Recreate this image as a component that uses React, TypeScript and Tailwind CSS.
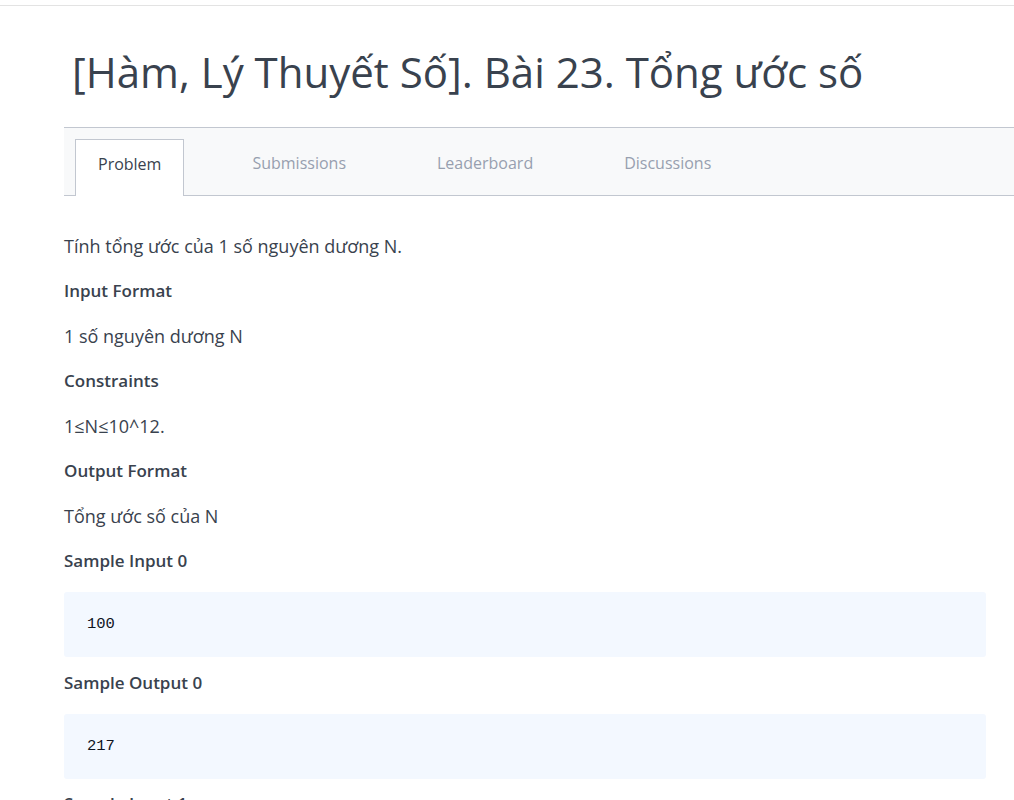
import React from 'react';

const tabs = ['Problem', 'Submissions', 'Leaderboard', 'Discussions'];

function Heading({ children }: { children: React.ReactNode }) {
  return <div className="font-semibold text-[17px] leading-6 mb-[21px]">{children}</div>;
}

function Para({ children }: { children: React.ReactNode }) {
  return <p className="leading-6 mb-[21px]">{children}</p>;
}

function CodeBlock({ value }: { value: string }) {
  return (
    <pre className="bg-[#f3f8ff] rounded-[3px] px-[23px] py-[24px] text-[15.5px] leading-[17px] text-[#0e141e] font-['Liberation_Mono',monospace]">
      {value}
    </pre>
  );
}

export default function App() {
  return (
    <div className="min-h-screen bg-white overflow-hidden font-['Open_Sans',sans-serif] text-[#39424e]">
      <div className="h-[5px]" />
      <div className="border-t border-[#e3e3e3]" />
      <div className="pl-[64px]">
        <h1 className="pl-[8px] pt-[42px] pb-[31px] text-[42px] leading-[48px] font-normal">
          [Hàm, Lý Thuyết Số]. Bài 23. Tổng ước số
        </h1>

        <div className="flex items-end h-[69px] bg-[#f8f9fa] border-t border-b border-[#c2c7d0] pl-[11px] gap-[45px]">
          {tabs.map((t, i) => (
            <div
              key={t}
              className={
                i === 0
                  ? 'h-[57px] -mb-px pt-[12px] leading-6 px-[22px] bg-white border border-b-0 border-[#c2c7d0] text-[#39424e] text-[16px] font-medium'
                  : 'h-[57px] pt-[13px] leading-6 px-[23px] text-[#979faf] text-[16px] font-medium'
              }
            >
              {t}
            </div>
          ))}
        </div>

        <div className="w-[922px] pt-[38px] text-[18px]">
          <Para>Tính tổng ước của 1 số nguyên dương N.</Para>
          <Heading>Input Format</Heading>
          <Para>1 số nguyên dương N</Para>
          <Heading>Constraints</Heading>
          <Para>1≤N≤10^12.</Para>
          <Heading>Output Format</Heading>
          <Para>Tổng ước số của N</Para>
          <div className="font-semibold text-[17px] leading-6 mb-[19px]">Sample Input 0</div>
          <CodeBlock value="100" />
          <div className="font-semibold text-[17px] leading-6 mt-[14px] mb-[19px]">Sample Output 0</div>
          <CodeBlock value="217" />
          <div className="font-semibold text-[17px] leading-6 mt-[13px] mb-[19px]">Sample Input 1</div>
          <CodeBlock value="28" />
        </div>
      </div>
    </div>
  );
}
